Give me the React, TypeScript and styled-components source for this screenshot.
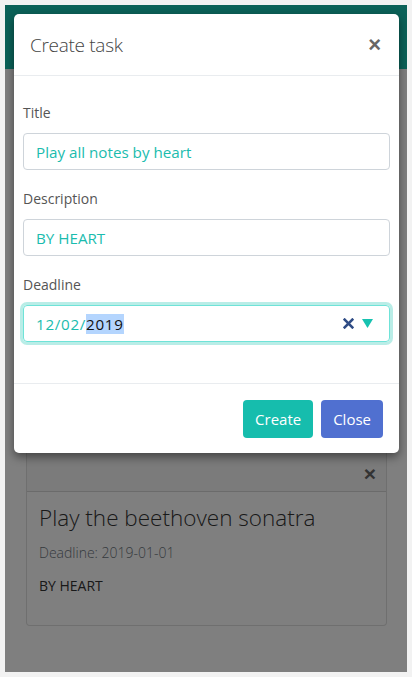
import React from "react";
import styled, { createGlobalStyle } from "styled-components";

const GlobalStyle = createGlobalStyle`
  html, body {
    margin: 0;
    padding: 0;
    background: #f2f2f2;
  }
  body {
    font-family: "Open Sans", "Noto Sans", sans-serif;
    padding: 5px;
  }
  * {
    box-sizing: border-box;
  }
`;

const Frame = styled.div`
  position: relative;
  width: 402px;
  height: 667px;
  background: #ffffff;
  overflow: hidden;
`;

const TopBar = styled.div`
  height: 64px;
  background: #17c2b0;
`;

const Content = styled.div`
  padding: 372px 20px 0 21px;
`;

const Card = styled.div`
  border: 1px solid rgba(0, 0, 0, 0.13);
  border-radius: 4px;
  background: #ffffff;
`;

const CardHeader = styled.div`
  display: flex;
  justify-content: flex-end;
  align-items: flex-end;
  height: 50px;
  padding: 0 10px 7px;
  background: rgba(0, 0, 0, 0.03);
  border-bottom: 1px solid rgba(0, 0, 0, 0.13);
`;

const CardBody = styled.div`
  padding: 11px 12px 29px;
`;

const CardTitle = styled.div`
  font-size: 22.5px;
  font-weight: 300;
  color: #333333;
  line-height: 30px;
  margin-bottom: 10px;
`;

const CardText = styled.div<{ $muted?: boolean }>`
  font-size: 14px;
  font-weight: ${(p) => (p.$muted ? 300 : 400)};
  color: ${(p) => (p.$muted ? "#6c757d" : "#333333")};
  line-height: 20px;
  margin-bottom: 13px;
  &:last-child {
    margin-bottom: 0;
  }
`;

const CloseX = styled.span<{ $size?: number }>`
  font-size: ${(p) => p.$size ?? 22}px;
  font-weight: 700;
  line-height: 1;
  color: #666666;
  font-family: "Liberation Sans", Arial, sans-serif;
`;

const Backdrop = styled.div`
  position: absolute;
  inset: 0;
  background: rgba(0, 0, 0, 0.5);
`;

const Modal = styled.div`
  position: absolute;
  top: 9px;
  left: 9px;
  width: 385px;
  background: #ffffff;
  border-radius: 5px;
  box-shadow: 0 4px 10px rgba(0, 0, 0, 0.45);
`;

const ModalHeader = styled.div`
  display: flex;
  justify-content: space-between;
  align-items: center;
  height: 62px;
  padding: 0 18px 0 16px;
  border-bottom: 1px solid #e9ecef;
`;

const ModalTitle = styled.div`
  font-size: 19px;
  font-weight: 300;
  color: #444444;
  letter-spacing: -0.3px;
`;

const ModalBody = styled.div`
  padding: 26px 9px 41px;
`;

const Group = styled.div`
  margin-bottom: 18px;
  &:last-child {
    margin-bottom: 0;
  }
`;

const Label = styled.div`
  font-size: 14px;
  color: #555555;
  line-height: 22px;
  margin-bottom: 9px;
`;

const Field = styled.div<{ $focus?: boolean }>`
  display: flex;
  align-items: center;
  height: 37px;
  padding: 0 12px;
  border: 1px solid ${(p) => (p.$focus ? "#6fe3d8" : "#ced4da")};
  border-radius: 4px;
  box-shadow: ${(p) => (p.$focus ? "0 0 0 3px rgba(23, 194, 176, 0.3)" : "none")};
  font-size: 15.2px;
  color: #1bbcae;
`;

const FieldText = styled.span<{ $spaced?: boolean }>`
  flex: 1;
  white-space: nowrap;
  letter-spacing: ${(p) => (p.$spaced ? "0.7px" : "0")};
`;

const Selected = styled.span`
  background: #b4d5fe;
  color: #111111;
`;

const DateControls = styled.div`
  display: flex;
  align-items: center;
  gap: 8px;
  margin-right: 4px;
`;

const ModalFooter = styled.div`
  display: flex;
  justify-content: flex-end;
  gap: 8px;
  height: 70px;
  padding: 16px 16px 0;
  border-top: 1px solid #e9ecef;
`;

const Button = styled.button<{ $variant: "create" | "close" }>`
  height: 38px;
  padding: 0 12px;
  border: none;
  border-radius: 4px;
  font-family: inherit;
  font-size: 15px;
  color: #ffffff;
  background: ${(p) => (p.$variant === "create" ? "#16bdad" : "#5070d0")};
`;

export default function App() {
  return (
    <>
      <GlobalStyle />
      <Frame>
        <TopBar />
        <Content>
          <Card>
            <CardHeader>
              <CloseX $size={21}>×</CloseX>
            </CardHeader>
            <CardBody>
              <CardTitle>Play the beethoven sonatra</CardTitle>
              <CardText $muted>Deadline: 2019-01-01</CardText>
              <CardText>BY HEART</CardText>
            </CardBody>
          </Card>
        </Content>
        <Backdrop />
        <Modal>
          <ModalHeader>
            <ModalTitle>Create task</ModalTitle>
            <CloseX $size={22}>×</CloseX>
          </ModalHeader>
          <ModalBody>
            <Group>
              <Label>Title</Label>
              <Field>
                <FieldText>Play all notes by heart</FieldText>
              </Field>
            </Group>
            <Group>
              <Label>Description</Label>
              <Field>
                <FieldText>BY HEART</FieldText>
              </Field>
            </Group>
            <Group>
              <Label>Deadline</Label>
              <Field $focus>
                <FieldText $spaced>
                  12/02/<Selected>2019</Selected>
                </FieldText>
                <DateControls>
                  <svg width="11" height="11" viewBox="0 0 10 10">
                    <path
                      d="M1.5 1.5 L8.5 8.5 M8.5 1.5 L1.5 8.5"
                      stroke="#2f4c85"
                      strokeWidth="2.4"
                      strokeLinecap="square"
                    />
                  </svg>
                  <svg width="11" height="9" viewBox="0 0 11 9">
                    <path d="M0 0 H11 L5.5 9 Z" fill="#17c2b0" />
                  </svg>
                </DateControls>
              </Field>
            </Group>
          </ModalBody>
          <ModalFooter>
            <Button $variant="create">Create</Button>
            <Button $variant="close">Close</Button>
          </ModalFooter>
        </Modal>
      </Frame>
    </>
  );
}
